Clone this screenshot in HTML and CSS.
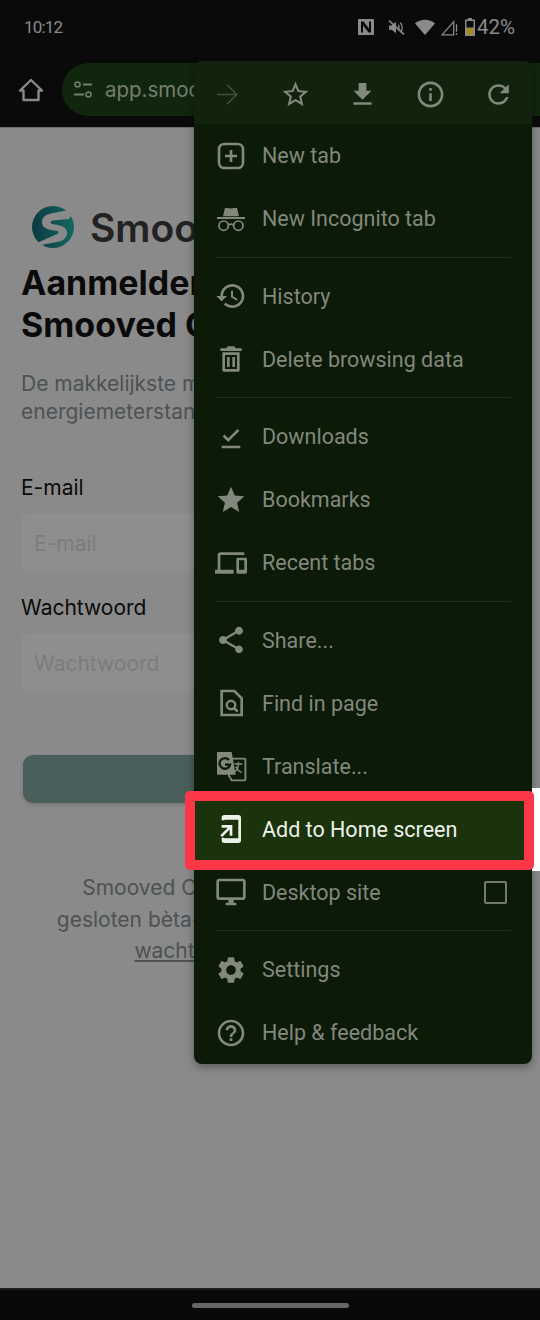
FILE: index.html
```html
<!DOCTYPE html>
<html lang="en">
<head>
  <meta charset="UTF-8">
  <title>Add to Home screen</title>
  <link rel="stylesheet" href="styles.css">
</head>
<body>
  <div class="phone">

    <div class="status-bar">
      <span class="time">10:12</span>
      <div class="status-icons">
        <svg class="st-nfc" viewBox="0 0 16 16"><path fill-rule="evenodd" d="M1 0h14a1 1 0 0 1 1 1v14a1 1 0 0 1-1 1H1a1 1 0 0 1-1-1V1a1 1 0 0 1 1-1zm2 2.500v11h2V6.500L10.500 13.500H13v-11h-2v7L5.500 2.500z"/></svg>
        <svg class="st-mute" viewBox="0 0 16 16"><path d="M1 6h2.500L7.500 2.500v11L3.500 10H1z"/><path d="M9.500 5.500c1.200.8 1.200 4.200 0 5M11.500 3.500c2.500 2 2.500 7 0 9" fill="none" stroke="currentColor" stroke-width="1.300"/><path d="M1 1.500 15 14.500" stroke="currentColor" stroke-width="1.500"/></svg>
        <svg class="st-wifi" viewBox="0 0 20 16"><path d="M0 4.500C5.500-.5 14.500-.5 20 4.500L10 16z"/></svg>
        <svg class="st-signal" viewBox="0 0 16 16"><path d="M1 15 12 2.500V15z" fill="none" stroke="currentColor" stroke-width="1.200"/><path d="M14 5h1.200v7H14zM14 13.500h1.200V15H14z"/></svg>
        <svg class="st-batt" viewBox="0 0 10 18"><path d="M3 0h4v1.500h3V18H0V1.500h3z"/><path d="M1.500 9.500h7v7h-7z" fill="#a08c2a"/><path d="M1.500 3h7v6.500h-7z" fill="#0a0a0a"/></svg>
        <span class="batt-text">42%</span>
      </div>
    </div>

    <div class="toolbar">
      <svg class="home-icon" viewBox="0 0 26 24"><path d="M13 2 2 12.500h3.500V22h15v-9.500H24z" fill="none" stroke="currentColor" stroke-width="2.400" stroke-linejoin="round"/></svg>
      <div class="url-bar">
        <svg class="tune-icon" viewBox="0 0 20 18"><circle cx="4.500" cy="3.500" r="2.500" fill="none" stroke="currentColor" stroke-width="1.600"/><path d="M10 3.500h9M1 13.500h10" stroke="currentColor" stroke-width="1.800"/><circle cx="15.500" cy="13.500" r="2.500" fill="none" stroke="currentColor" stroke-width="1.600"/></svg>
        <span class="url-text">app.smooved.be</span>
      </div>
    </div>

    <div class="page">
      <div class="brand">
        <svg class="brand-logo" viewBox="0 0 46 46">
          <defs><linearGradient id="tealGrad" x1="0" y1="0" x2="1" y2="0"><stop offset="0" stop-color="#0b3a42"/><stop offset="1" stop-color="#15675f"/></linearGradient></defs>
          <circle cx="22" cy="23" r="21" fill="url(#tealGrad)"/>
          <path d="M44 5 22 9c-7 1-11 4-11 9 0 5 4 7 9 8l6 1c2 .4 2 3-1 3.500L6 39l-1 3 21-4c7-1 10-5 10-9 0-5-4-7-9-8l-6-1c-2-.4-2-3 1-3.500L38 15z" fill="#8a8a8a"/>
        </svg>
        <span class="brand-name">Smooved</span>
      </div>
      <h1 class="page-title">Aanmelden bij<br>Smooved Connect</h1>
      <p class="page-desc">De makkelijkste manier om je<br>energiemeterstanden door te geven</p>

      <label class="field-label">E-mail</label>
      <div class="field-input">E-mail</div>
      <label class="field-label pw-label">Wachtwoord</label>
      <div class="field-input">Wachtwoord</div>

      <div class="submit-btn"></div>

      <p class="page-foot">Smooved Connect is momenteel in de<br>gesloten bèta-fase. Schrijf je nu in op onze<br><span class="foot-link">wachtlijst</span> om mee te testen</p>
    </div>

    <div class="nav-bar"><div class="nav-pill"></div></div>

    <div class="menu">
      <div class="menu-top">
        <svg class="top-icon dim" viewBox="0 0 24 24"><path d="M12 4l-.8.8L17.800 11.400H4v1.200h13.800l-6.600 6.600.8.800 8-8z"/></svg>
        <svg class="top-icon" viewBox="0 0 24 24"><path d="M22 9.240l-7.190-.62L12 2 9.190 8.630 2 9.240l5.460 4.730L5.820 21 12 17.270 18.180 21l-1.630-7.030L22 9.240zM12 15.400l-3.760 2.270 1-4.280-3.320-2.880 4.380-.38L12 6.100l1.710 4.040 4.380.38-3.320 2.880 1 4.280L12 15.400z"/></svg>
        <svg class="top-icon" viewBox="0 0 24 24"><path d="M19 9h-4V3H9v6H5l7 7 7-7zM5 18v2h14v-2H5z"/></svg>
        <svg class="top-icon" viewBox="0 0 24 24"><path d="M11 7h2v2h-2zm0 4h2v6h-2zm1-9C6.480 2 2 6.480 2 12s4.480 10 10 10 10-4.480 10-10S17.520 2 12 2zm0 18c-4.410 0-8-3.590-8-8s3.590-8 8-8 8 3.590 8 8-3.590 8-8 8z"/></svg>
        <svg class="top-icon" viewBox="0 0 24 24"><path d="M17.650 6.350C16.200 4.900 14.210 4 12 4c-4.420 0-7.990 3.580-7.990 8s3.570 8 7.990 8c3.730 0 6.840-2.550 7.730-6h-2.080c-.82 2.330-3.040 4-5.650 4-3.310 0-6-2.690-6-6s2.690-6 6-6c1.660 0 3.140.69 4.220 1.780L13 11h7V4l-2.350 2.350z"/></svg>
      </div>

      <div class="menu-row">
        <svg class="row-icon" viewBox="0 0 24 24"><rect x="3" y="3" width="18" height="18" rx="4" fill="none" stroke="currentColor" stroke-width="2"/><path d="M11 7.500h2V11h3.500v2H13v3.500h-2V13H7.500v-2H11z"/></svg>
        <span>New tab</span>
      </div>
      <div class="menu-row">
        <svg class="row-icon" viewBox="0 0 24 24"><path d="M7.500 3.500 12 4.200l4.500-.7L18 10H6zM1.500 10.500h21v1.500h-21z"/><g fill="none" stroke="currentColor" stroke-width="1.300"><circle cx="6.500" cy="17" r="3.500"/><circle cx="17.500" cy="17" r="3.500"/><path d="M10 16.500c1.200-.8 2.800-.8 4 0"/></g></svg>
        <span>New Incognito tab</span>
      </div>
      <div class="menu-sep"></div>
      <div class="menu-row">
        <svg class="row-icon" viewBox="0 0 24 24"><path d="M13 3c-4.970 0-9 4.030-9 9H1l3.890 3.890.07.140L9 12H6c0-3.870 3.130-7 7-7s7 3.130 7 7-3.130 7-7 7c-1.930 0-3.680-.79-4.940-2.060l-1.420 1.420C8.270 19.990 10.510 21 13 21c4.970 0 9-4.030 9-9s-4.030-9-9-9zm-1 5v5l4.280 2.540.72-1.210-3.500-2.080V8H12z"/></svg>
        <span>History</span>
      </div>
      <div class="menu-row">
        <svg class="row-icon" viewBox="0 0 24 24"><path fill-rule="evenodd" d="M9.500 2.500h5l1 1.500H20v2H4V4h4.500zM5.500 7h13v13.500a1 1 0 0 1-1 1h-11a1 1 0 0 1-1-1zm2 2v10.500h9V9zm1.500 1.500h2V18H9zm4 0h2V18h-2z"/></svg>
        <span>Delete browsing data</span>
      </div>
      <div class="menu-sep"></div>
      <div class="menu-row">
        <svg class="row-icon" viewBox="0 0 24 24"><path d="M5 18.500h14v2H5zM9.900 15.800 5.700 11.600l1.400-1.400 2.800 2.800 7-7 1.400 1.400z"/></svg>
        <span>Downloads</span>
      </div>
      <div class="menu-row">
        <svg class="row-icon" viewBox="0 0 24 24"><path d="M12 17.270 18.180 21l-1.640-7.030L22 9.240l-7.190-.61L12 2 9.190 8.630 2 9.240l5.460 4.730L5.820 21z"/></svg>
        <span>Bookmarks</span>
      </div>
      <div class="menu-row">
        <svg class="row-icon" viewBox="0 0 24 24"><path d="M4 6h18V4H4c-1.100 0-2 .9-2 2v11H0v3h14v-3H4V6zm19 2h-6c-.55 0-1 .45-1 1v10c0 .55.45 1 1 1h6c.55 0 1-.45 1-1V9c0-.55-.45-1-1-1zm-1 9h-4v-7h4v7z"/></svg>
        <span>Recent tabs</span>
      </div>
      <div class="menu-sep"></div>
      <div class="menu-row">
        <svg class="row-icon" viewBox="0 0 24 24"><path d="M18 16.080c-.76 0-1.440.3-1.960.77L8.910 12.700c.05-.23.09-.46.09-.7s-.04-.47-.09-.7l7.050-4.110c.54.5 1.250.81 2.040.81 1.660 0 3-1.340 3-3s-1.340-3-3-3-3 1.340-3 3c0 .24.04.47.09.7L8.040 9.810C7.500 9.310 6.790 9 6 9c-1.660 0-3 1.340-3 3s1.340 3 3 3c.79 0 1.500-.31 2.040-.81l7.120 4.160c-.05.21-.08.43-.08.65 0 1.610 1.310 2.920 2.920 2.920 1.610 0 2.920-1.310 2.920-2.920s-1.310-2.920-2.920-2.920z"/></svg>
        <span>Share...</span>
      </div>
      <div class="menu-row">
        <svg class="row-icon" viewBox="0 0 24 24"><path d="M5 3h9.500L20 8.500V21H5z" fill="none" stroke="currentColor" stroke-width="2"/><circle cx="12" cy="13.500" r="3.200" fill="none" stroke="currentColor" stroke-width="1.800"/><path d="M14.200 15.700 17 18.500" stroke="currentColor" stroke-width="2"/></svg>
        <span>Find in page</span>
      </div>
      <div class="menu-row">
        <svg class="row-icon" viewBox="0 0 24 24"><path d="M1.500 1.500h11l3 17h-14z"/><path d="M10 6.500h12a.8.8 0 0 1 .8.8V22a.8.8 0 0 1-.8.8h-9.500l-2-3.500z" fill="none" stroke="currentColor" stroke-width="1.400"/><path d="M10.500 7.500a4 4 0 1 0 .8 3.500H7.500" fill="none" stroke="#0c1a08" stroke-width="1.700"/><path d="M14.500 10.500h6M17.500 9v1.500c0 3-1.500 5-3 6M15.500 12.500c1 2 2.500 3.500 4.500 4.500" fill="none" stroke="currentColor" stroke-width="1.100"/></svg>
        <span>Translate...</span>
      </div>
      <div class="menu-row menu-row-hl">
        <span class="edge-strip"></span>
        <span class="red-box"></span>
        <svg class="row-icon" viewBox="0 0 24 24"><path d="M7 1.500h10.500a2 2 0 0 1 2 2v17a2 2 0 0 1-2 2H7a2 2 0 0 1-2-2V18.500h2V19h10.500V5H7v.5H5v-2a2 2 0 0 1 2-2z"/><path d="M5 9h8v8h-2v-4.600L5.400 18 4 16.600 9.600 11H5z"/></svg>
        <span>Add to Home screen</span>
      </div>
      <div class="menu-row">
        <svg class="row-icon" viewBox="0 0 24 24"><path d="M21 2H3c-1.100 0-2 .9-2 2v12c0 1.100.9 2 2 2h7v2H8v2h8v-2h-2v-2h7c1.100 0 2-.9 2-2V4c0-1.100-.9-2-2-2zm0 14H3V4h18v12z"/></svg>
        <span>Desktop site</span>
        <span class="check-box"></span>
      </div>
      <div class="menu-sep"></div>
      <div class="menu-row">
        <svg class="row-icon" viewBox="0 0 24 24"><path d="M19.140 12.940c.04-.3.06-.61.06-.94 0-.32-.02-.64-.07-.94l2.030-1.580c.18-.14.23-.41.120-.61l-1.920-3.320c-.12-.22-.37-.29-.59-.22l-2.390.96c-.5-.38-1.030-.7-1.620-.94l-.36-2.540c-.04-.24-.24-.41-.48-.41h-3.840c-.24 0-.43.17-.47.41l-.36 2.540c-.59.24-1.130.57-1.620.94l-2.390-.96c-.22-.08-.47 0-.59.22L2.740 8.870c-.12.21-.08.47.12.61l2.030 1.580c-.05.3-.09.63-.09.94s.02.64.07.94l-2.030 1.580c-.18.14-.23.41-.12.61l1.920 3.320c.12.22.37.29.59.22l2.390-.96c.5.38 1.030.7 1.620.94l.36 2.540c.05.24.24.41.48.41h3.840c.24 0 .44-.17.47-.41l.36-2.540c.59-.24 1.130-.56 1.620-.94l2.390.96c.22.08.47 0 .59-.22l1.920-3.320c.12-.22.07-.47-.12-.61l-2.010-1.580zM12 15.600c-1.980 0-3.600-1.620-3.600-3.600s1.620-3.600 3.600-3.600 3.600 1.620 3.600 3.600-1.620 3.600-3.600 3.600z"/></svg>
        <span>Settings</span>
      </div>
      <div class="menu-row">
        <svg class="row-icon" viewBox="0 0 24 24"><path d="M11 18h2v-2h-2v2zm1-16C6.480 2 2 6.480 2 12s4.480 10 10 10 10-4.480 10-10S17.520 2 12 2zm0 18c-4.410 0-8-3.590-8-8s3.590-8 8-8 8 3.590 8 8-3.590 8-8 8zm0-14c-2.210 0-4 1.790-4 4h2c0-1.100.9-2 2-2s2 .9 2 2c0 2-3 1.750-3 5h2c0-2.250 3-2.500 3-5 0-2.210-1.790-4-4-4z"/></svg>
        <span>Help &amp; feedback</span>
      </div>
    </div>

  </div>
</body>
</html>
```

FILE: styles.css
```css
body {
  margin: 0;
  background: #0a0a0a;
  font-family: 'Roboto', sans-serif;
}

.phone {
  position: relative;
  width: 540px;
  height: 1320px;
  display: flex;
  flex-direction: column;
  overflow: hidden;
}

/* status bar */
.status-bar {
  height: 54px;
  flex: none;
  display: flex;
  align-items: center;
  justify-content: space-between;
  padding: 0 25px 0 24px;
  color: #8a8a8a;
  background: #0a0a0a;
}

.time {
  font-size: 17px;
  letter-spacing: -0.8px;
}

.status-icons {
  display: flex;
  align-items: center;
}

.status-icons svg {
  fill: currentColor;
  display: block;
}

.st-nfc { width: 16px; height: 16px; margin-right: 14px; }
.st-mute { width: 17px; height: 17px; margin-right: 10px; }
.st-wifi { width: 20px; height: 16px; margin-right: 6px; }
.st-signal { width: 17px; height: 17px; margin-right: 7px; }
.st-batt { width: 10px; height: 18px; margin-right: 2px; }

.batt-text {
  font-size: 20.500px;
}

/* browser toolbar */
.toolbar {
  height: 73px;
  flex: none;
  display: flex;
  align-items: center;
  background: #0a0a0a;
  padding: 0 0 2px 18px;
  box-sizing: border-box;
  color: #8a8a8a;
}

.home-icon {
  width: 26px;
  height: 24px;
  margin-right: 18px;
}

.url-bar {
  flex: 1;
  height: 53px;
  border-radius: 27px 0 0 27px;
  background: #10260d;
  display: flex;
  align-items: center;
  padding-left: 11px;
  color: #747e6e;
}

.tune-icon {
  width: 20px;
  height: 18px;
  margin-right: 12px;
}

.url-text {
  font-family: 'Inter', sans-serif;
  font-size: 20.500px;
}

/* dimmed page under the menu */
.page {
  flex: 1;
  background: #8a8a8a;
  border-top: 1px solid #6e6e6e;
  padding: 76px 0 0 21px;
  font-family: 'Inter', sans-serif;
  white-space: nowrap;
  overflow: hidden;
}

.brand {
  display: flex;
  align-items: center;
  padding-left: 10px;
  height: 46px;
}

.brand-logo {
  width: 46px;
  height: 46px;
  margin-right: 13px;
}

.brand-name {
  font-size: 39px;
  font-weight: 600;
  color: #222;
}

.page-title {
  margin: 12px 0 0;
  font-size: 34px;
  line-height: 42px;
  font-weight: 700;
  color: #0a0a0a;
}

.page-desc {
  margin: 24px 0 0;
  font-size: 21px;
  line-height: 28px;
  color: #4d5253;
}

.field-label {
  display: block;
  margin-top: 48px;
  font-size: 21px;
  line-height: 28px;
  color: #0a0a0a;
}

.pw-label {
  margin-top: 22px;
}

.field-input {
  margin-top: 12px;
  width: 480px;
  height: 58px;
  box-sizing: border-box;
  padding-left: 13px;
  display: flex;
  align-items: center;
  border-radius: 6px;
  background: #8e8e8e;
  color: #7c7c7c;
  font-size: 21px;
}

.submit-btn {
  margin: 63px 0 0 2px;
  width: 495px;
  height: 48px;
  border-radius: 10px;
  background: #4a5f5b;
  box-shadow: 0 2px 4px rgba(0, 0, 0, 0.15);
}

.page-foot {
  margin: 69px 21px 0 0;
  text-align: center;
  font-size: 21px;
  line-height: 31.500px;
  color: #4d5253;
}

.foot-link {
  text-decoration: underline;
}

/* navigation bar */
.nav-bar {
  height: 32px;
  flex: none;
  box-sizing: border-box;
  border-top: 2px solid #1c1c1c;
  background: #090909;
  display: flex;
  align-items: center;
  justify-content: center;
}

.nav-pill {
  width: 157px;
  height: 5px;
  border-radius: 3px;
  background: #666;
}

/* overflow menu */
.menu {
  position: absolute;
  left: 194px;
  top: 61px;
  width: 338px;
  background: #0c1a08;
  border-radius: 8px;
  box-shadow: 0 3px 8px rgba(0, 0, 0, 0.35);
  color: #82887c;
  font-size: 21.500px;
}

.menu-top {
  height: 63px;
  display: flex;
  align-items: center;
  justify-content: space-around;
  background: #11230c;
  border-radius: 8px 8px 0 0;
}

.top-icon {
  width: 31px;
  height: 31px;
  fill: #82887c;
  margin-top: 3px;
}

.top-icon.dim {
  fill: #43503b;
}

.menu-row {
  position: relative;
  height: 63px;
  display: flex;
  align-items: center;
  padding: 0 25px 0 21px;
}

.row-icon {
  width: 32px;
  height: 32px;
  flex: none;
  margin-right: 15px;
  fill: currentColor;
}

.menu-sep {
  height: 14.500px;
  display: flex;
  align-items: center;
  padding: 0 21px;
}

.menu-sep::before {
  content: "";
  flex: 1;
  height: 1px;
  background: #232f1c;
}

.menu-row-hl {
  background: #1a330d;
  color: #eef1ea;
}

.edge-strip {
  position: absolute;
  left: 338px;
  top: -9.500px;
  width: 8px;
  height: 83px;
  background: #fff;
}

.red-box {
  position: absolute;
  left: -9px;
  right: -2px;
  top: -6.500px;
  bottom: -9.500px;
  border: 10px solid #fb3748;
  border-radius: 5px;
}

.check-box {
  margin-left: auto;
  width: 19px;
  height: 19px;
  border: 2px solid #757b70;
  border-radius: 2px;
}
```
